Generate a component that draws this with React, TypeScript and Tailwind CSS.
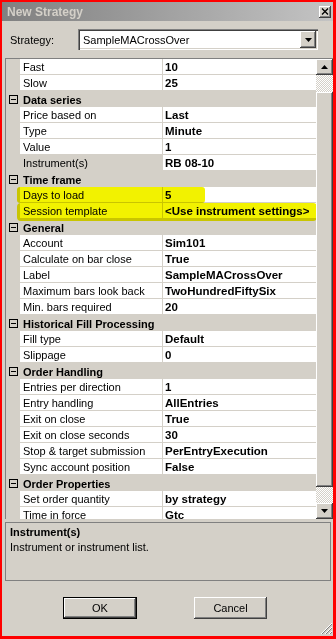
import React from "react";

type Row =
  | { cat: string }
  | { name: string; value: string; selected?: boolean };

const rows: Row[] = [
  { name: "Fast", value: "10" },
  { name: "Slow", value: "25" },
  { cat: "Data series" },
  { name: "Price based on", value: "Last" },
  { name: "Type", value: "Minute" },
  { name: "Value", value: "1" },
  { name: "Instrument(s)", value: "RB 08-10", selected: true },
  { cat: "Time frame" },
  { name: "Days to load", value: "5" },
  { name: "Session template", value: "<Use instrument settings>" },
  { cat: "General" },
  { name: "Account", value: "Sim101" },
  { name: "Calculate on bar close", value: "True" },
  { name: "Label", value: "SampleMACrossOver" },
  { name: "Maximum bars look back", value: "TwoHundredFiftySix" },
  { name: "Min. bars required", value: "20" },
  { cat: "Historical Fill Processing" },
  { name: "Fill type", value: "Default" },
  { name: "Slippage", value: "0" },
  { cat: "Order Handling" },
  { name: "Entries per direction", value: "1" },
  { name: "Entry handling", value: "AllEntries" },
  { name: "Exit on close", value: "True" },
  { name: "Exit on close seconds", value: "30" },
  { name: "Stop & target submission", value: "PerEntryExecution" },
  { name: "Sync account position", value: "False" },
  { cat: "Order Properties" },
  { name: "Set order quantity", value: "by strategy" },
  { name: "Time in force", value: "Gtc" },
];

const raised =
  "bg-[#d4d0c8] shadow-[inset_-1px_-1px_0_#404040,inset_1px_1px_0_#ffffff,inset_-2px_-2px_0_#808080]";

function Arrow({ up }: { up?: boolean }) {
  return (
    <svg width="7" height="4" viewBox="0 0 7 4">
      <path d={up ? "M3.5 0 L7 4 L0 4 Z" : "M0 0 L7 0 L3.5 4 Z"} fill="#000" />
    </svg>
  );
}

function MinusBox() {
  return (
    <svg width="9" height="9" viewBox="0 0 9 9" className="shrink-0">
      <rect x="0.5" y="0.5" width="8" height="8" fill="none" stroke="#000" />
      <path d="M2 4.5 H7" stroke="#000" />
    </svg>
  );
}

export default function App() {
  return (
    <div
      className="w-[336px] h-[639px] bg-[#ff0000] pl-[2px] pt-[2px] pr-[3px] pb-[3px] text-[11px] text-black"
      style={{ fontFamily: '"Liberation Sans", Arial, sans-serif' }}
    >
      <div className="flex h-full flex-col bg-[#d4d0c8]">
        {/* title bar */}
        <div className="flex h-[19px] shrink-0 items-center justify-between bg-gradient-to-r from-[#808080] to-[#c4c4c4] pl-[5px] pr-[2px]">
          <span className="text-[12px] font-bold text-[#d4d0c8]">New Strategy</span>
          <div className={`flex h-[12px] w-[12px] items-center justify-center ${raised}`}>
            <svg width="8" height="7" viewBox="0 0 8 7">
              <path d="M1 0.5 L7 6.5 M7 0.5 L1 6.5" stroke="#000" strokeWidth="1.3" />
            </svg>
          </div>
        </div>

        {/* strategy selector */}
        <div className="mt-[8px] flex h-[21px] items-center">
          <span className="ml-[8px] w-[68px] pt-[1px]">Strategy:</span>
          <div className="flex h-[21px] w-[240px] items-center bg-white pl-[5px] pr-[2px] shadow-[inset_1px_1px_0_#808080,inset_2px_2px_0_#404040,inset_-1px_-1px_0_#ffffff,inset_-2px_-2px_0_#d4d0c8]">
            <span className="flex-1 pt-[1px]">SampleMACrossOver</span>
            <div className={`flex h-[17px] w-[16px] items-center justify-center ${raised}`}>
              <Arrow />
            </div>
          </div>
        </div>

        {/* property grid */}
        <div className="ml-[3px] mt-[8px] flex h-[461px] border-l border-t border-[#808080]">
          <div className="relative flex-1 overflow-hidden">
            {rows.map((r, i) =>
              "cat" in r ? (
                <div key={i} className="flex h-[16px] items-center bg-[#d4d0c8]">
                  <div className="flex w-[14px] justify-center pl-[1px]">
                    <MinusBox />
                  </div>
                  <span className="pl-[3px] pt-[2px] font-bold">{r.cat}</span>
                </div>
              ) : (
                <div key={i} className="flex h-[16px] bg-[#d4d0c8]">
                  <div className="w-[14px]" />
                  <div
                    className={`flex w-[142px] items-center border-b border-[#d4d0c8] pl-[3px] pt-[2px] ${
                      r.selected ? "bg-[#d4d0c8]" : "bg-white"
                    }`}
                  >
                    {r.name}
                  </div>
                  <div className="flex flex-1 items-center border-b border-l border-[#d4d0c8] bg-white pl-[2px] pt-[2px] text-[11.5px] font-bold">
                    {r.value}
                  </div>
                </div>
              )
            )}
            {/* highlighter marks */}
            <div className="pointer-events-none absolute left-[11px] top-[128px] h-[16px] w-[188px] rounded-[3px] bg-[#f2f200] mix-blend-multiply" />
            <div className="pointer-events-none absolute left-[11px] top-[144px] h-[18px] w-[300px] rounded-[4px] bg-[#f2f200] mix-blend-multiply" />
          </div>

          {/* scrollbar */}
          <div className="flex w-[17px] shrink-0 flex-col">
            <div className={`flex h-[16px] items-center justify-center ${raised}`}>
              <Arrow up />
            </div>
            <div className="h-[17px] bg-[repeating-conic-gradient(#ffffff_0_25%,#d4d0c8_0_50%)] bg-[length:2px_2px]" />
            <div className={`h-[395px] ${raised}`} />
            <div className="flex-1 bg-[repeating-conic-gradient(#ffffff_0_25%,#d4d0c8_0_50%)] bg-[length:2px_2px]" />
            <div className={`flex h-[16px] items-center justify-center ${raised}`}>
              <Arrow />
            </div>
          </div>
        </div>

        {/* help panel */}
        <div className="ml-[3px] mr-[2px] mt-[3px] h-[59px] border border-[#808080] px-[4px] pt-[2px] leading-[15px]">
          <div className="font-bold">Instrument(s)</div>
          <div>Instrument or instrument list.</div>
        </div>

        {/* buttons */}
        <div className="relative flex flex-1 items-start">
          <div className="ml-[61px] mt-[16px] flex h-[22px] w-[74px] items-center justify-center border border-black bg-[#d4d0c8] pt-[1px] shadow-[inset_-1px_-1px_0_#404040,inset_1px_1px_0_#ffffff,inset_-2px_-2px_0_#808080]">
            OK
          </div>
          <div className={`ml-[57px] mt-[16px] flex h-[22px] w-[73px] items-center justify-center pt-[1px] ${raised}`}>
            Cancel
          </div>
          <svg
            width="13"
            height="13"
            viewBox="0 0 13 13"
            className="absolute bottom-[1px] right-[0px]"
          >
            <path d="M12 1 L1 12 M12 5 L5 12 M12 9 L9 12" stroke="#ffffff" />
            <path d="M12 2 L2 12 M12 6 L6 12 M12 10 L10 12" stroke="#808080" />
          </svg>
        </div>
      </div>
    </div>
  );
}
